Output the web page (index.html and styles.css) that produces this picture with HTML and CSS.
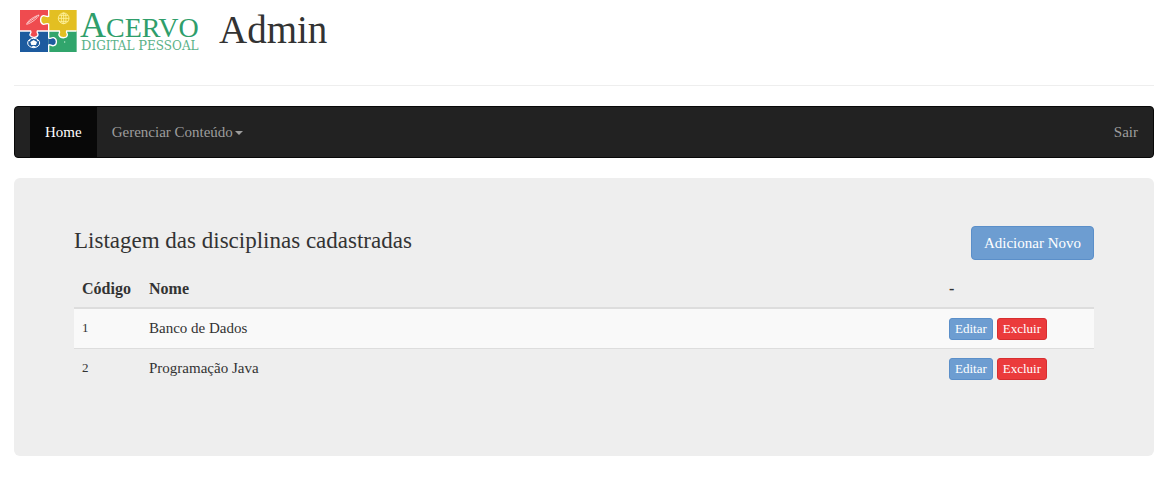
FILE: index.html
```html
<!DOCTYPE html>
<html lang="pt-BR">
<head>
<meta charset="utf-8">
<meta name="viewport" content="width=device-width, initial-scale=1">
<title>Acervo Digital Pessoal - Admin</title>
<link rel="stylesheet" href="styles.css">
</head>
<body>
<div class="container">
  <header class="header">
    <svg class="logo" viewBox="0 0 182 48" role="img" aria-label="Acervo Digital Pessoal">
      <g transform="translate(1 3) scale(.3333)">
        <path fill="#ef4b4f" d="M0 0H86V66H0z"/>
        <path fill="#e3bf22" d="M86 0H170V66H86z"/>
        <path fill="#1d5b9f" d="M0 63H86V126H0z"/>
        <path fill="#31a56c" d="M86 63H170V126H86z"/>
        <path fill="#e3bf22" stroke="#fff" stroke-width="4" d="M86 0V19C79 21 76 16 70 17C60 19 58 39 70 43C77 44 80 38 86 42V63H118C121 70 115 71 117 76C121 86 140 86 142 75C143 70 137 68 140 63H170"/>
        <path fill="#ef4b4f" stroke="#fff" stroke-width="4" d="M0 63H32C36 69 28 70 30 76C34 85 53 84 54 74C54 69 49 68 52 63H86"/>
        <path fill="#1d5b9f" stroke="#fff" stroke-width="4" d="M86 63V84C91 88 94 81 101 83C112 87 112 103 101 107C94 109 91 102 86 105V126"/>
        <path fill="none" stroke="#fff" stroke-width="2" d="M20 43C20 33 47 17 57 15C54 24 33 40 20 43zM24 38L51 19"/>
        <g fill="none" stroke="#fff3a0" stroke-width="2.5"><circle cx="131" cy="25" r="16"/><ellipse cx="131" cy="25" rx="7" ry="16"/><path d="M131 9V41M115 25H147M118 16H144M118 34H144"/></g>
        <ellipse cx="41" cy="99" rx="18" ry="14" fill="none" stroke="#fff" stroke-width="3"/>
        <path fill="#fff" d="M41 90L51 96L48 105H34L31 96zM24 92L31 87L30 94zM58 92L51 87L52 94zM34 110L41 107L48 110L41 113z"/>
        <circle cx="134" cy="96" r="2" fill="#c9f2d5"/>
      </g>
      <text class="logo-name" x="61" y="30"><tspan class="logo-initial">A</tspan>CERVO</text>
      <text class="logo-sub" x="62" y="43"><tspan class="logo-sub-initial">D</tspan>IGITAL <tspan class="logo-sub-initial">P</tspan>ESSOAL</text>
    </svg>
    <h1 class="title">Admin</h1>
  </header>
  <nav class="navbar">
    <a class="nav-link active" href="#">Home</a>
    <a class="nav-link" href="#" aria-haspopup="true">Gerenciar Conteúdo<span class="caret"></span></a>
    <a class="nav-link logout" href="#">Sair</a>
  </nav>
  <main class="panel">
    <div class="panel-head">
      <h2 class="subtitle">Listagem das disciplinas cadastradas</h2>
      <button class="btn btn-primary" type="button">Adicionar Novo</button>
    </div>
    <table class="table">
      <thead>
        <tr><th class="col-code">Código</th><th>Nome</th><th class="col-actions">-</th></tr>
      </thead>
      <tbody>
        <tr><td class="code">1</td><td>Banco de Dados</td><td><div class="actions"><button class="btn btn-primary btn-xs" type="button">Editar</button><button class="btn btn-danger btn-xs" type="button">Excluir</button></div></td></tr>
        <tr><td class="code">2</td><td>Programação Java</td><td><div class="actions"><button class="btn btn-primary btn-xs" type="button">Editar</button><button class="btn btn-danger btn-xs" type="button">Excluir</button></div></td></tr>
      </tbody>
    </table>
  </main>
</div>
</body>
</html>
```
FILE: styles.css
```css
* { box-sizing: border-box; }
body {
  margin: 0;
  background: #fff;
  color: #333;
  font-family: "Liberation Serif", serif;
  font-size: 15px;
  line-height: 20px;
}
.container { padding: 0 14px; }
.header {
  display: flex;
  align-items: flex-start;
  gap: 18px;
  height: 86px;
  padding: 7px 0 0 5px;
  margin-bottom: 20px;
  border-bottom: 1px solid #eee;
}
.logo { width: 182px; height: 48px; overflow: visible; }
.logo-name, .logo-sub { fill: #2f9e6b; }
.logo-name { font-size: 28px; }
.logo-initial { font-size: 36px; }
.logo-sub { font-family: "DejaVu Serif", serif; font-size: 12px; opacity: .8; }
.logo-sub-initial { font-size: 13px; }
.title { margin: 0; font-size: 39px; line-height: 46px; font-weight: 400; }
.navbar {
  display: flex;
  padding: 0 0 0 15px;
  margin-bottom: 20px;
  background: #222;
  border: 1px solid #080808;
  border-radius: 4px;
}
.nav-link {
  display: flex;
  align-items: center;
  padding: 15px;
  color: #9d9d9d;
  text-decoration: none;
}
.active { background: #080808; color: #fff; }
.logout { margin-left: auto; }
.caret {
  margin-left: 2px;
  margin-top: 2px;
  border-top: 4px solid;
  border-left: 4px solid transparent;
  border-right: 4px solid transparent;
}
.panel { padding: 48px 60px 68px; background: #eee; border-radius: 6px; }
.panel-head { display: flex; justify-content: space-between; margin-bottom: 10px; }
.subtitle { margin: 0; font-size: 23px; line-height: 30px; font-weight: 400; }
.btn {
  padding: 6px 12px;
  border: 1px solid;
  border-radius: 4px;
  color: #fff;
  font-family: inherit;
  font-size: 15px;
  line-height: 20px;
  white-space: nowrap;
  cursor: pointer;
}
.btn-primary { background: #6d9dd1; border-color: #5b8fc9; }
.btn-danger { background: #eb3b3c; border-color: #d72e30; }
.btn-xs { padding: 1px 5px; border-radius: 3px; font-size: 13px; line-height: 18px; }
.table { width: 100%; border-collapse: separate; border-spacing: 0; }
.table th { padding: 8px; border-bottom: 2px solid #ddd; text-align: left; font-size: 16px; line-height: 21px; }
.table td { padding: 9px 8px 8px; vertical-align: top; line-height: 20px; }
.table tbody tr:first-child td { background: #f9f9f9; }
.table tbody tr + tr td { border-top: 1px solid #ddd; }
.col-code { width: 67px; }
.col-actions { width: 153px; }
.table .code { font-size: 13px; }
.actions { display: flex; gap: 4px; }
```
